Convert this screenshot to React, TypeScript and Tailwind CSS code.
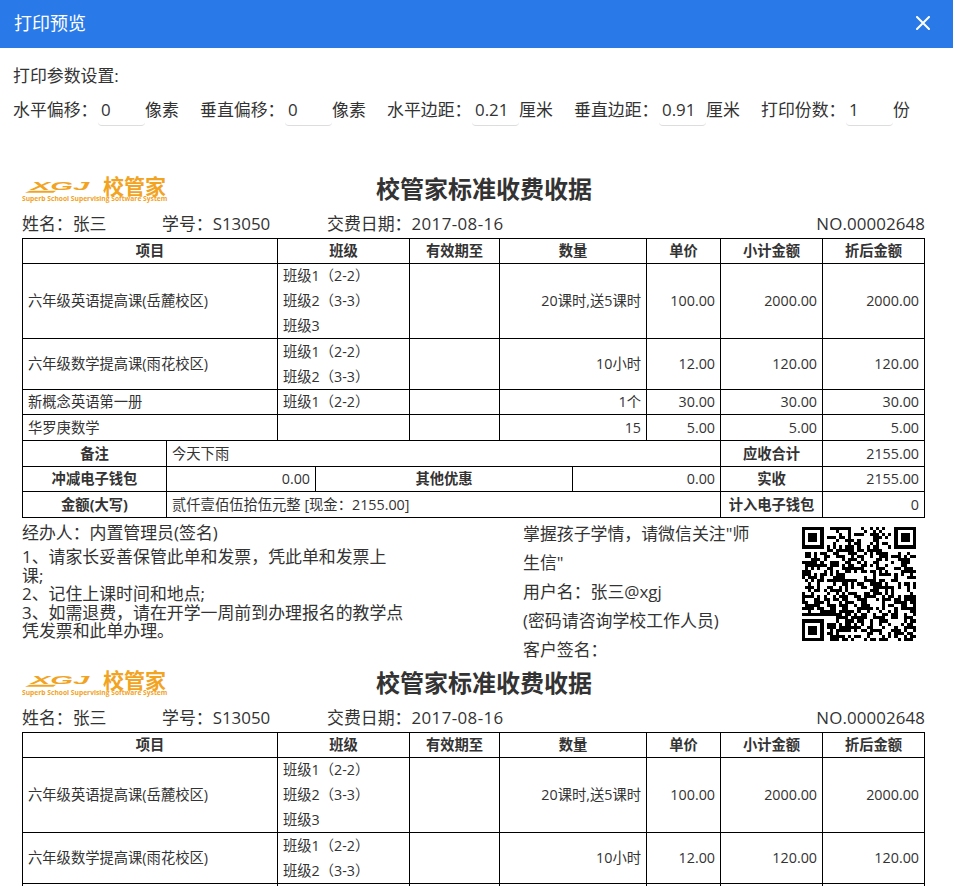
import { useMemo } from 'react';

const FONT = 'font-["Open_Sans","Noto_Sans_CJK_SC",sans-serif]';

const params = [
  { label: '水平偏移：', value: '0', unit: '像素' },
  { label: '垂直偏移：', value: '0', unit: '像素' },
  { label: '水平边距：', value: '0.21', unit: '厘米' },
  { label: '垂直边距：', value: '0.91', unit: '厘米' },
  { label: '打印份数：', value: '1', unit: '份' },
];

const rows = [
  { name: '六年级英语提高课(岳麓校区)', classes: ['班级1（2-2）', '班级2（3-3）', '班级3'], qty: '20课时,送5课时', price: '100.00', sub: '2000.00', net: '2000.00', h: 'h-[75px]' },
  { name: '六年级数学提高课(雨花校区)', classes: ['班级1（2-2）', '班级2（3-3）'], qty: '10小时', price: '12.00', sub: '120.00', net: '120.00', h: 'h-[51px]' },
  { name: '新概念英语第一册', classes: ['班级1（2-2）'], qty: '1个', price: '30.00', sub: '30.00', net: '30.00', h: 'h-[25px]' },
  { name: '华罗庚数学', classes: [], qty: '15', price: '5.00', sub: '5.00', net: '5.00', h: 'h-[26px]' },
];

const headers = ['项目', '班级', '有效期至', '数量', '单价', '小计金额', '折后金额'];

const cell = 'border border-black px-[5px] py-0 text-[14.3px] leading-[24px] text-[#333]';
const head = `${cell} text-center font-bold`;
const right = `${cell} text-right`;

function QrCode() {
  const size = 37;
  const cells = useMemo(() => {
    const out: { x: number; y: number }[] = [];
    let seed = 20170816;
    const inFinder = (x: number, y: number) =>
      (x < 8 && y < 8) || (x >= size - 8 && y < 8) || (x < 8 && y >= size - 8);
    for (let y = 0; y < size; y++) {
      for (let x = 0; x < size; x++) {
        seed = (seed * 1103515245 + 12345) & 0x7fffffff;
        if (!inFinder(x, y) && (seed >> 16) % 100 < 52) out.push({ x, y });
      }
    }
    return out;
  }, []);
  const finder = (x: number, y: number) => (
    <g key={`${x}-${y}`}>
      <rect x={x} y={y} width={7} height={7} fill="#000" />
      <rect x={x + 1} y={y + 1} width={5} height={5} fill="#fff" />
      <rect x={x + 2} y={y + 2} width={3} height={3} fill="#000" />
    </g>
  );
  return (
    <svg viewBox={`0 0 ${size} ${size}`} className="h-[114px] w-[114px]" shapeRendering="crispEdges">
      {cells.map((c) => (
        <rect key={`${c.x}_${c.y}`} x={c.x} y={c.y} width={1} height={1} fill="#000" />
      ))}
      {finder(0, 0)}
      {finder(size - 7, 0)}
      {finder(0, size - 7)}
    </svg>
  );
}

function Logo() {
  return (
    <div className="flex w-[144px] flex-col text-[#f2a31f]">
      <div className="flex h-[15px] items-center">
        <svg viewBox="0 0 72 15" className="ml-[3px] h-[15px] w-[68px]">
          <path d="M0 14 L30 14 L33 12 L5 12 Z" fill="#f2a31f" />
          <text x="6" y="11" fontSize="11" fontWeight="700" fontStyle="italic" fill="#f2a31f" textLength="62" lengthAdjust="spacingAndGlyphs" fontFamily="Liberation Sans, sans-serif">XGJ</text>
        </svg>
        <span className="ml-[10px] text-[21px] leading-[15px] font-bold whitespace-nowrap">校管家</span>
      </div>
      <span className="mt-[1px] text-[6.7px] leading-[8px] font-bold whitespace-nowrap">Superb School Supervising Software System</span>
    </div>
  );
}

function Receipt() {
  return (
    <div className="w-[902px]">
      <div className="flex h-[30px] items-start">
        <div className="pt-[4px]">
          <Logo />
        </div>
        <h2 className="ml-[210px] text-[24px] leading-[28px] font-bold whitespace-nowrap text-[#333]">校管家标准收费收据</h2>
      </div>
      <div className="mt-[7px] flex h-[24px] items-center text-[16.9px] leading-[24px] text-[#333]">
        <span className="w-[140px]">姓名：张三</span>
        <span className="w-[165px]">学号：S13050</span>
        <span>
          交费日期：<span className="tracking-[0.4px]">2017-08-16</span>
        </span>
        <span className="ml-auto -mr-px tracking-[0.1px]">NO.00002648</span>
      </div>
      <table className="mt-[2px] w-[902px] table-fixed border-collapse">
        <colgroup>
          <col className="w-[255px]" />
          <col className="w-[132px]" />
          <col className="w-[90px]" />
          <col className="w-[147px]" />
          <col className="w-[74px]" />
          <col className="w-[102px]" />
          <col className="w-[102px]" />
        </colgroup>
        <thead>
          <tr className="h-[25px]">
            {headers.map((h) => (
              <th key={h} className={head}>{h}</th>
            ))}
          </tr>
        </thead>
        <tbody>
          {rows.map((r) => (
            <tr key={r.name} className={r.h}>
              <td className={cell}>{r.name}</td>
              <td className={cell}>
                <div className="flex flex-col gap-px">
                  {r.classes.map((c) => (
                    <div key={c}>{c}</div>
                  ))}
                </div>
              </td>
              <td className={cell} />
              <td className={right}>{r.qty}</td>
              <td className={right}>{r.price}</td>
              <td className={right}>{r.sub}</td>
              <td className={right}>{r.net}</td>
            </tr>
          ))}
        </tbody>
      </table>
      <table className="-mt-px w-[902px] table-fixed border-collapse">
        <colgroup>
          <col className="w-[144px]" />
          <col className="w-[149px]" />
          <col className="w-[257px]" />
          <col className="w-[148px]" />
          <col className="w-[102px]" />
          <col className="w-[102px]" />
        </colgroup>
        <tbody>
          <tr className="h-[26px]">
            <td className={head}>备注</td>
            <td className={cell} colSpan={3}>今天下雨</td>
            <td className={head}>应收合计</td>
            <td className={right}>2155.00</td>
          </tr>
          <tr className="h-[25px]">
            <td className={head}>冲减电子钱包</td>
            <td className={right}>0.00</td>
            <td className={head}>其他优惠</td>
            <td className={right}>0.00</td>
            <td className={head}>实收</td>
            <td className={right}>2155.00</td>
          </tr>
          <tr className="h-[26px]">
            <td className={head}>金额(大写)</td>
            <td className={cell} colSpan={3}>贰仟壹佰伍拾伍元整 [现金：2155.00]</td>
            <td className={head}>计入电子钱包</td>
            <td className={right}>0</td>
          </tr>
        </tbody>
      </table>
      <div className="flex h-[151px] text-[16.9px] text-[#333]">
        <div className="w-[501px] pt-[3px]">
          <p className="leading-[24px]">经办人：内置管理员(签名)</p>
          <p className="mt-[3px] w-[382px] leading-[18.5px]">
            1、请家长妥善保管此单和发票，凭此单和发票上课;
            <br />
            2、记住上课时间和地点;
            <br />
            3、如需退费，请在开学一周前到办理报名的教学点凭发票和此单办理。
          </p>
        </div>
        <div className="w-[236px] pt-[1px] leading-[29px]">
          <p>掌握孩子学情，请微信关注"师生信"</p>
          <p>用户名：张三@xgj</p>
          <p>(密码请咨询学校工作人员)</p>
          <p>客户签名：</p>
        </div>
        <div className="ml-[43px] pt-[9px]">
          <QrCode />
        </div>
      </div>
    </div>
  );
}

export default function App() {
  return (
    <div className={`${FONT} flex h-[886px] w-[953px] flex-col overflow-hidden bg-white`}>
      <header className="flex h-[48px] shrink-0 items-center justify-between bg-[#2979e8] pr-[23px] pb-[2px] pl-[14px] text-white">
        <span className="text-[18px]">打印预览</span>
        <svg viewBox="0 0 14 14" className="h-[14px] w-[14px]" fill="none" stroke="currentColor" strokeWidth={2} strokeLinecap="round">
          <path d="M1 1l12 12M13 1L1 13" />
        </svg>
      </header>
      <section className="px-[13px] pt-[16px] text-[16.9px] text-[#333]">
        <p className="leading-[24px]">打印参数设置:</p>
        <div className="mt-[6px] flex h-[32px] items-start gap-[21px]">
          {params.map((p) => (
            <div key={p.label} className="flex items-start leading-[32px]">
              <span className="w-[85px] whitespace-nowrap">{p.label}</span>
              <input
                readOnly
                value={p.value}
                className="h-[32px] w-[47px] rounded-[4px] border-b border-[#ddd] px-[3px] leading-[32px] text-[#333] outline-none"
              />
              <span className="w-[34px] whitespace-nowrap">{p.unit}</span>
            </div>
          ))}
        </div>
      </section>
      <main className="pt-[49px] pl-[22px]">
        <Receipt />
        <Receipt />
      </main>
    </div>
  );
}
